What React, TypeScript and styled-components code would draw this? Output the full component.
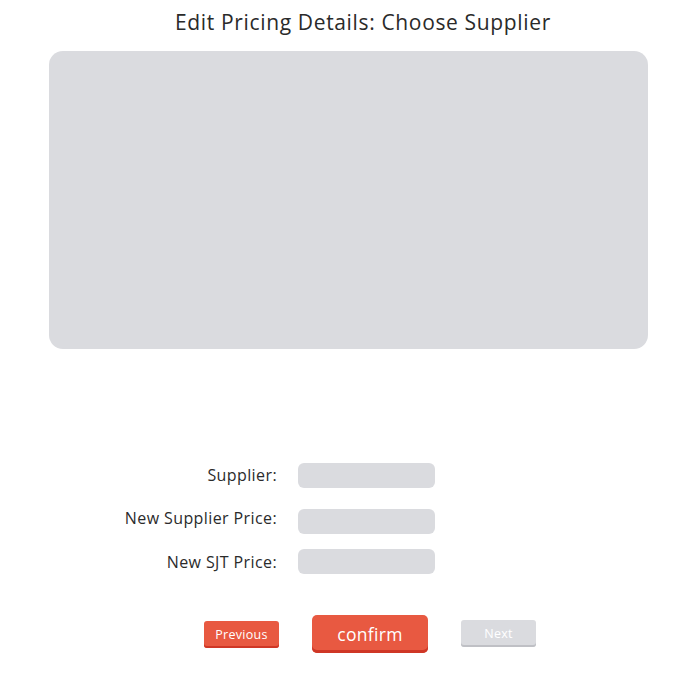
import React from "react";
import styled, { createGlobalStyle } from "styled-components";

const GlobalStyle = createGlobalStyle`
  html, body {
    margin: 0;
    padding: 0;
    background: #ffffff;
  }
  body {
    font-family: "Open Sans", "Liberation Sans", sans-serif;
    color: #2b2b2b;
  }
`;

const fields = [
  { label: "Supplier:", spacing: 114, shift: -1 },
  { label: "New Supplier Price:", spacing: 21, shift: -4 },
  { label: "New SJT Price:", spacing: 15, shift: 0 },
];

const App: React.FC = () => {
  return (
    <>
      <GlobalStyle />
      <Page>
        <Title>Edit Pricing Details: Choose Supplier</Title>
        <SupplierPanel />
        <Form>
          {fields.map((f) => (
            <FieldRow key={f.label} spacing={f.spacing}>
              <Label shift={f.shift}>{f.label}</Label>
              <Input />
            </FieldRow>
          ))}
        </Form>
        <Actions>
          <SmallButton variant="red">Previous</SmallButton>
          <ConfirmButton>confirm</ConfirmButton>
          <SmallButton variant="grey">Next</SmallButton>
        </Actions>
      </Page>
    </>
  );
};

export default App;

const Page = styled.div`
  width: 700px;
  height: 700px;
  display: flex;
  flex-direction: column;
  overflow: hidden;
`;

const Title = styled.h1`
  margin: 8px 0 0 175px;
  font-size: 21px;
  line-height: 28px;
  font-weight: 400;
  letter-spacing: 0.65px;
  color: #2a2a2a;
  white-space: nowrap;
`;

const SupplierPanel = styled.div`
  margin: 15px 0 0 49px;
  width: 599px;
  height: 298px;
  background: #dadbdf;
  border-radius: 14px;
`;

const Form = styled.div`
  display: flex;
  flex-direction: column;
`;

const FieldRow = styled.div<{ spacing: number }>`
  margin-top: ${({ spacing }) => `${spacing}px`};
  display: grid;
  grid-template-columns: 277px 137px;
  column-gap: 21px;
  align-items: center;
`;

const Label = styled.div<{ shift: number }>`
  text-align: right;
  font-size: 16px;
  letter-spacing: 0.4px;
  color: #2b2b2b;
  white-space: nowrap;
  transform: translateY(${({ shift }) => `${shift}px`});
`;

const Input = styled.div`
  height: 25px;
  background: #dadbdf;
  border-radius: 6px;
`;

const Actions = styled.div`
  margin-top: 41px;
  padding-left: 204px;
  display: flex;
  align-items: center;
  gap: 33px;
`;

const SmallButton = styled.button<{ variant: "red" | "grey" }>`
  width: 75px;
  height: 27px;
  padding: 0;
  border: none;
  border-radius: 3px;
  font-family: "Open Sans", "Liberation Sans", sans-serif;
  font-size: 12.5px;
  letter-spacing: 0.3px;
  color: #ffffff;
  background: ${({ variant }) => (variant === "red" ? "#e85941" : "#dadbdf")};
  box-shadow: inset 0 -2px 0
    ${({ variant }) => (variant === "red" ? "#cf3726" : "#bfc0c5")};
  margin-top: ${({ variant }) => (variant === "grey" ? "-2px" : "0")};
`;

const ConfirmButton = styled.button`
  width: 116px;
  height: 38px;
  padding: 0;
  border: none;
  border-radius: 5px;
  font-family: "Open Sans", "Liberation Sans", sans-serif;
  font-size: 17.5px;
  letter-spacing: 0.3px;
  color: #ffffff;
  background: #e85941;
  box-shadow: inset 0 -3px 0 #cf3726;
`;
